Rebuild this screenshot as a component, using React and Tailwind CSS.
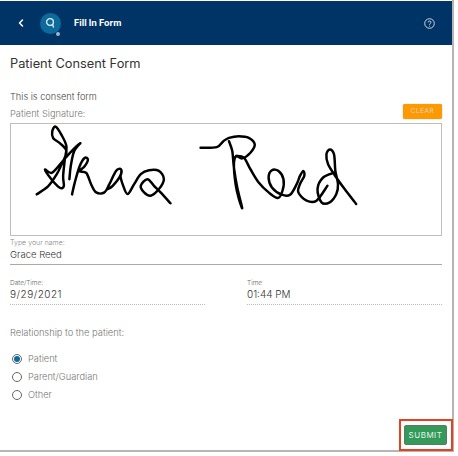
import React from 'react';
import { ChevronLeft } from 'lucide-react';

const font = { fontFamily: 'Inter' };

// pen strokes, traced in 3x coordinates of the signature
const strokes = [
  [[105, 221], [140, 196], [165, 161], [180, 131], [195, 91], [175, 66], [155, 51], [152, 31], [162, 16], [180, 41], [195, 76], [190, 116], [185, 166], [187, 196], [175, 201], [150, 176], [130, 146], [150, 156], [175, 131], [205, 96], [237, 66], [218, 91], [208, 136], [204, 175]],
  [[212, 221], [220, 186], [235, 136], [250, 111], [260, 116], [250, 136], [235, 151], [255, 156], [270, 191], [285, 215], [310, 215], [325, 190], [345, 150], [360, 145], [358, 165], [335, 195], [320, 205]],
  [[358, 165], [365, 190], [380, 220], [400, 190], [420, 160], [445, 148], [475, 150], [490, 175], [475, 205], [450, 225], [430, 215], [420, 195], [440, 175], [460, 195], [480, 215], [510, 248]],
  [[601, 80], [650, 78], [670, 60], [687, 50], [717, 45], [747, 50], [765, 70], [752, 95], [727, 112], [709, 105], [702, 130], [707, 190], [717, 235], [727, 262], [712, 200], [702, 140], [697, 90], [687, 60]],
  [[709, 105], [732, 110], [752, 145], [777, 185], [807, 215], [835, 232], [849, 210], [852, 175], [837, 150], [817, 148], [807, 170], [817, 200], [847, 222], [872, 222], [892, 190], [902, 165], [912, 150], [915, 165], [902, 190], [897, 215], [922, 240], [952, 240], [985, 195]],
  [[1007, 155], [972, 170], [955, 205], [967, 245], [992, 245], [1012, 220], [1017, 190], [1009, 150], [1005, 100], [992, 85], [982, 100], [987, 130], [1012, 170], [1037, 205], [1072, 250]],
];

// smooth curve through the points
const toPath = (pts) => {
  let d = `M${pts[0][0]} ${pts[0][1]}`;
  for (let i = 0; i < pts.length - 1; i++) {
    const p0 = pts[i - 1] || pts[i];
    const p1 = pts[i];
    const p2 = pts[i + 1];
    const p3 = pts[i + 2] || p2;
    d += ` C${p1[0] + (p2[0] - p0[0]) / 6} ${p1[1] + (p2[1] - p0[1]) / 6} ${p2[0] - (p3[0] - p1[0]) / 6} ${p2[1] - (p3[1] - p1[1]) / 6} ${p2[0]} ${p2[1]}`;
  }
  return d;
};

function Logo() {
  return (
    <div className="relative w-[21px] h-[21px] rounded-full bg-[#0d6a9c] flex items-center justify-center">
      <svg width="11" height="12" viewBox="0 0 11 12" fill="none" stroke="#e8f2f8" strokeWidth="1.3">
        <circle cx="5" cy="5" r="3.4" />
        <path d="M7.6 7.4 L8.6 10.5" />
      </svg>
      <span className="absolute right-[1px] bottom-[-2px] w-[4px] h-[4px] rounded-full bg-[#a9b4c2]" />
    </div>
  );
}

function Signature() {
  return (
    <svg viewBox="30 8 1296 336" className="w-full h-full" fill="none" stroke="#000" strokeWidth="7.5" strokeLinecap="round" strokeLinejoin="round">
      {strokes.map((s, i) => (
        <path key={i} d={toPath(s)} />
      ))}
    </svg>
  );
}

function Radio({ label, checked }) {
  return (
    <div className="flex items-center gap-[6px] h-[18px]">
      <span className="w-[10px] h-[10px] rounded-full border border-[#666] flex items-center justify-center">
        {checked && <span className="w-[6px] h-[6px] rounded-full bg-[#0d6a9c]" />}
      </span>
      <span className="text-[9.25px] font-light text-[#777]">{label}</span>
    </div>
  );
}

function DateField({ label, value, valueClass }) {
  return (
    <div className="w-[195px]">
      <div className="text-[6.5px] leading-[10px] font-light text-[#666]">{label}</div>
      <div className={`text-[10px] leading-[12px] font-light text-[#333] pb-[4px] border-b border-dotted border-[#bbb] ${valueClass}`}>{value}</div>
    </div>
  );
}

export default function App() {
  return (
    <div className="w-[458px] h-[456px] bg-white" style={font}>
      <div className="w-[454px] h-[452px] pt-[1px] border-r-2 border-b-2 border-[#b5b5b5] flex flex-col">
        <div className="h-[44px] bg-[#003366] flex items-center pl-[15px] pr-[17px] text-white">
          <ChevronLeft size={12} strokeWidth={3} />
          <div className="ml-[13px]"><Logo /></div>
          <div className="ml-[13px] text-[9px] font-bold">Fill In Form</div>
          <svg className="ml-auto" width="11" height="11" viewBox="0 0 11 11" fill="none" stroke="#dfe6ee" strokeWidth="0.9">
            <circle cx="5.5" cy="5.5" r="4.8" />
            <path d="M4 4.3 C4 2.6 7 2.6 7 4.3 C7 5.4 5.5 5.4 5.5 6.8 M5.5 7.8 V8.6" />
          </svg>
        </div>
        <div className="flex-1 flex flex-col pl-[10px] pr-[10px] min-h-0">
          <div className="pt-[11px] text-[12.8px] leading-[16px] text-[#333]">Patient Consent Form</div>
          <div className="pt-[19px] text-[9.2px] leading-[12px] font-light text-[#444]">This is consent form</div>
          <div className="flex items-end justify-between h-[20px]">
            <div className="mb-[3px] text-[9.25px] leading-[12px] font-light text-[#777]">Patient Signature:</div>
            <div className="w-[39px] h-[15px] mb-[4px] rounded-[2px] bg-[#ff9900] text-[6.5px] tracking-[0.5px] text-[#dcd6cc] flex items-center justify-center shadow-[0_0_1px_#888]">CLEAR</div>
          </div>
          <div className="h-[113px] border border-[#bdbdbd]"><Signature /></div>
          <div className="pt-[2px] text-[7px] leading-[10px] font-light text-[#888]">Type your name:</div>
          <div className="text-[9.5px] leading-[13px] font-light text-[#333] pb-[3px] border-b border-[#aaa]">Grace Reed</div>
          <div className="flex justify-between pt-[13px]">
            <DateField label="Date/Time:" value="9/29/2021" valueClass="tracking-[0.5px]" />
            <DateField label="Time" value="01:44 PM" valueClass="" />
          </div>
          <div className="pt-[22px] text-[9.3px] leading-[12px] font-light text-[#777]">Relationship to the patient:</div>
          <div className="pt-[11px] pl-[2px] flex flex-col">
            <Radio label="Patient" checked />
            <Radio label="Parent/Guardian" />
            <Radio label="Other" />
          </div>
          <div className="mt-auto flex justify-end -mr-[11px] -mb-[1px]">
            <div className="border-2 border-[#e5401f] pl-[3px] pr-[4px] py-[4px]">
              <div className="w-[43px] h-[20px] rounded-[2px] bg-[#339a5a] border border-[#5a7a66] text-[8px] tracking-[0.5px] text-[#e8f2ea] flex items-center justify-center">SUBMIT</div>
            </div>
          </div>
        </div>
      </div>
    </div>
  );
}
